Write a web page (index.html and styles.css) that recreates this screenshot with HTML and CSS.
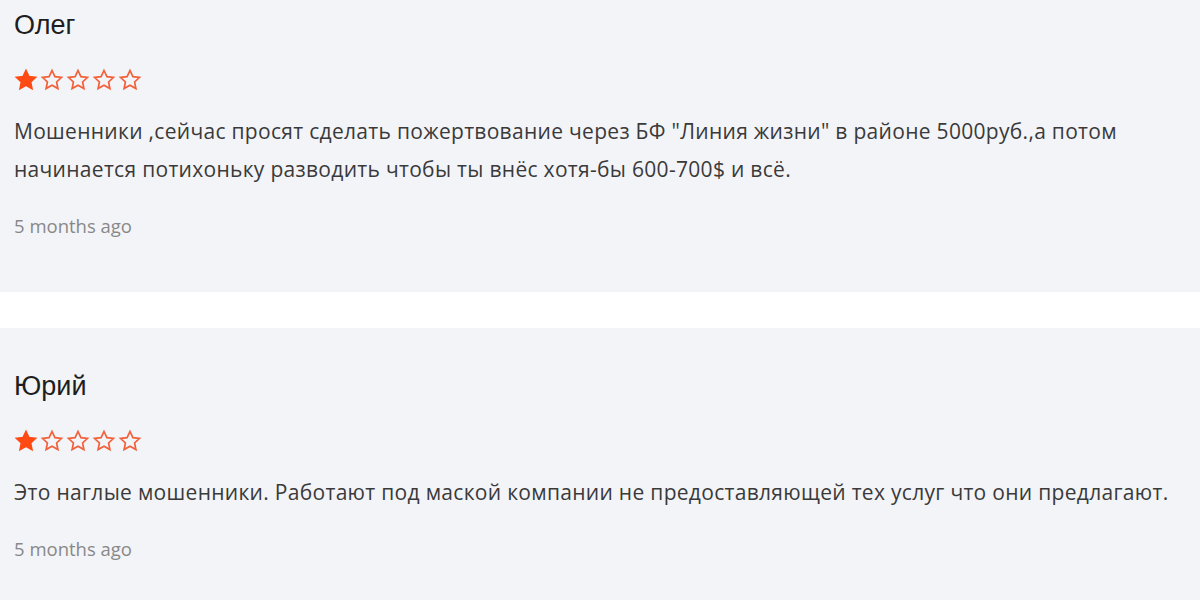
FILE: index.html
```html
<!DOCTYPE html>
<html lang="ru">
<head>
<meta charset="utf-8">
<title>Отзывы</title>
<link rel="stylesheet" href="styles.css">
</head>
<body>
<div class="reviews">
  <article class="review">
    <h3 class="review-name">Олег</h3>
    <div class="stars">
      <svg class="star filled" viewBox="0 0 24 24"><polygon points="12,2.5 14.9,8.6 21.5,9.4 16.6,14 17.9,20.6 12,17.3 6.1,20.6 7.4,14 2.5,9.4 9.1,8.6"/></svg>
      <svg class="star" viewBox="0 0 24 24"><polygon points="12,2.5 14.9,8.6 21.5,9.4 16.6,14 17.9,20.6 12,17.3 6.1,20.6 7.4,14 2.5,9.4 9.1,8.6"/></svg>
      <svg class="star" viewBox="0 0 24 24"><polygon points="12,2.5 14.9,8.6 21.5,9.4 16.6,14 17.9,20.6 12,17.3 6.1,20.6 7.4,14 2.5,9.4 9.1,8.6"/></svg>
      <svg class="star" viewBox="0 0 24 24"><polygon points="12,2.5 14.9,8.6 21.5,9.4 16.6,14 17.9,20.6 12,17.3 6.1,20.6 7.4,14 2.5,9.4 9.1,8.6"/></svg>
      <svg class="star" viewBox="0 0 24 24"><polygon points="12,2.5 14.9,8.6 21.5,9.4 16.6,14 17.9,20.6 12,17.3 6.1,20.6 7.4,14 2.5,9.4 9.1,8.6"/></svg>
    </div>
    <p class="review-text">Мошенники ,сейчас просят сделать пожертвование через БФ "Линия жизни" в районе 5000руб.,а потом начинается потихоньку разводить чтобы ты внёс хотя-бы 600-700$ и всё.</p>
    <div class="review-date">5 months ago</div>
  </article>
  <article class="review">
    <h3 class="review-name">Юрий</h3>
    <div class="stars">
      <svg class="star filled" viewBox="0 0 24 24"><polygon points="12,2.5 14.9,8.6 21.5,9.4 16.6,14 17.9,20.6 12,17.3 6.1,20.6 7.4,14 2.5,9.4 9.1,8.6"/></svg>
      <svg class="star" viewBox="0 0 24 24"><polygon points="12,2.5 14.9,8.6 21.5,9.4 16.6,14 17.9,20.6 12,17.3 6.1,20.6 7.4,14 2.5,9.4 9.1,8.6"/></svg>
      <svg class="star" viewBox="0 0 24 24"><polygon points="12,2.5 14.9,8.6 21.5,9.4 16.6,14 17.9,20.6 12,17.3 6.1,20.6 7.4,14 2.5,9.4 9.1,8.6"/></svg>
      <svg class="star" viewBox="0 0 24 24"><polygon points="12,2.5 14.9,8.6 21.5,9.4 16.6,14 17.9,20.6 12,17.3 6.1,20.6 7.4,14 2.5,9.4 9.1,8.6"/></svg>
      <svg class="star" viewBox="0 0 24 24"><polygon points="12,2.5 14.9,8.6 21.5,9.4 16.6,14 17.9,20.6 12,17.3 6.1,20.6 7.4,14 2.5,9.4 9.1,8.6"/></svg>
    </div>
    <p class="review-text">Это наглые мошенники. Работают под маской компании не предоставляющей тех услуг что они предлагают.</p>
    <div class="review-date">5 months ago</div>
  </article>
</div>
</body>
</html>
```
FILE: styles.css
```css
html, body {
  margin: 0;
  padding: 0;
  background: #ffffff;
}

body {
  font-family: "Open Sans", "Noto Sans", sans-serif;
  overflow: hidden;
}

.reviews {
  display: flex;
  flex-direction: column;
  gap: 36px;
  margin-top: -33px;
}

.review {
  background: #f3f4f8;
  padding: 43px 14px 51px;
}

.review-name {
  margin: 0;
  font-family: "Liberation Sans", Arial, sans-serif;
  font-weight: 400;
  font-size: 27px;
  line-height: 30px;
  color: #1e1e1e;
}

.stars {
  display: flex;
  gap: 2px;
  margin-top: 28px;
  height: 24px;
}

.star {
  width: 24px;
  height: 24px;
  display: block;
}

.star polygon {
  fill: none;
  stroke: #f2603a;
  stroke-width: 1.7;
  stroke-linejoin: miter;
}

.star.filled polygon {
  fill: #ff4a14;
  stroke: #ff4a14;
}

.review-text {
  margin: 20px 0 0;
  font-size: 21px;
  letter-spacing: 0.3px;
  line-height: 38px;
  color: #3a3a3a;
}

.review-date {
  margin-top: 23px;
  font-size: 18.5px;
  line-height: 30px;
  color: #888888;
}
```
